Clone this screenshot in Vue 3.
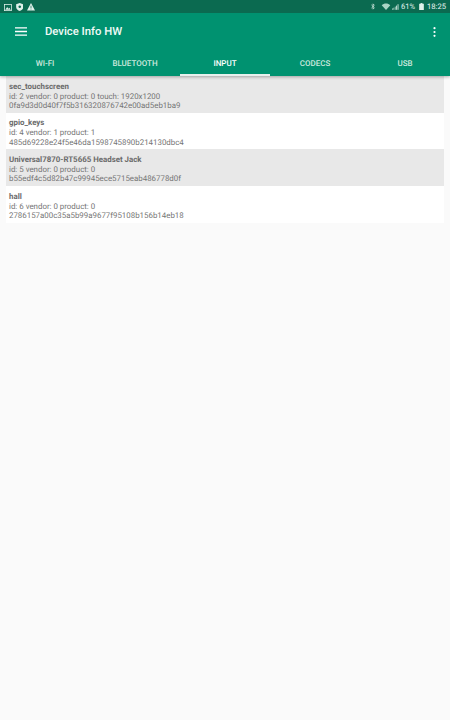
<script setup>
const tabs = [
  { label: 'WI-FI' },
  { label: 'BLUETOOTH' },
  { label: 'INPUT', active: true },
  { label: 'CODECS' },
  { label: 'USB' }
]
const devices = [
  { name: 'sec_touchscreen', info: 'id: 2 vendor: 0 product: 0 touch: 1920x1200', hash: '0fa9d3d0d40f7f5b316320876742e00ad5eb1ba9' },
  { name: 'gpio_keys', info: 'id: 4 vendor: 1 product: 1', hash: '485d69228e24f5e46da1598745890b214130dbc4' },
  { name: 'Universal7870-RT5665 Headset Jack', info: 'id: 5 vendor: 0 product: 0', hash: 'b55edf4c5d82b47c99945ece5715eab486778d0f' },
  { name: 'hall', info: 'id: 6 vendor: 0 product: 0', hash: '2786157a00c35a5b99a9677f95108b156b14eb18' }
]
</script>

<template>
  <div class="page">
    <header class="appbar">
      <div class="status">
        <div class="status-left">
          <svg width="8" height="7" viewBox="0 0 10 9"><rect x="0.5" y="0.5" width="9" height="8" fill="none" stroke="#dff1ea" stroke-width="1"/><path d="M1.5 7.5 L4 4 L5.5 6 L6.8 4.8 L8.5 7.5Z" fill="#dff1ea"/></svg>
          <svg width="7.5" height="8" viewBox="0 0 9 10"><path d="M4.5 0 L9 1.6 V5 C9 7.6 6.8 9.3 4.5 10 C2.2 9.3 0 7.6 0 5 V1.6Z" fill="#dff1ea"/><circle cx="4.5" cy="4.6" r="1.6" fill="#0b6a50"/></svg>
          <svg width="8" height="7.5" viewBox="0 0 11 10"><path d="M5.5 0 L11 10 H0Z" fill="#dff1ea"/><rect x="5" y="3.5" width="1" height="3.5" fill="#0b6a50"/><rect x="5" y="7.7" width="1" height="1" fill="#0b6a50"/></svg>
        </div>
        <div class="status-right">
          <svg class="bt" width="4" height="7" viewBox="0 0 6 10"><path d="M0.5 2.5 L5 6.8 L3 9 V1 L5 3.2 L0.5 7.5" fill="none" stroke="#dff1ea" stroke-width="1"/></svg>
          <svg class="wifi" width="10" height="7" viewBox="0 0 11 9"><path d="M0 3 C3 0 8 0 11 3 L5.5 9Z" fill="#a9d6c6"/></svg>
          <svg class="signal" width="7" height="6" viewBox="0 0 10 8"><rect x="0" y="6" width="1.2" height="2" fill="#a9d6c6"/><rect x="2" y="5" width="1.2" height="3" fill="#a9d6c6"/><rect x="4" y="3.5" width="1.2" height="4.5" fill="#a9d6c6"/><rect x="6" y="2" width="1.2" height="6" fill="#dff1ea"/><rect x="8" y="0" width="1.2" height="8" fill="#dff1ea"/></svg>
          <span class="status-text">61%</span>
          <svg class="batt" width="5" height="7" viewBox="0 0 6 9"><rect x="1.8" y="0" width="2.4" height="1.2" fill="#dff1ea"/><rect x="0" y="1" width="6" height="8" fill="#dff1ea"/></svg>
          <span class="status-text">18:25</span>
        </div>
      </div>
      <div class="toolbar">
        <svg class="menu" width="12" height="9" viewBox="0 0 12 9"><path d="M0 0.9H12M0 4.5H12M0 8.1H12" stroke="#fff" stroke-width="1.4"/></svg>
        <span class="title">Device Info HW</span>
        <svg class="more" width="3" height="10" viewBox="0 0 3 10"><circle cx="1.5" cy="1.2" r="1.1" fill="#fff"/><circle cx="1.5" cy="5" r="1.1" fill="#fff"/><circle cx="1.5" cy="8.8" r="1.1" fill="#fff"/></svg>
      </div>
      <nav class="tabs">
        <div v-for="t in tabs" :key="t.label" class="tab" :class="{ active: t.active }">{{ t.label }}</div>
      </nav>
    </header>
    <main class="list">
      <div v-for="(d, i) in devices" :key="d.name" class="row" :class="{ odd: i % 2 === 0 }">
        <div class="name">{{ d.name }}</div>
        <div class="line">{{ d.info }}</div>
        <div class="line">{{ d.hash }}</div>
      </div>
    </main>
  </div>
</template>

<style scoped>
.page {
  width: 450px;
  height: 720px;
  background: #fafafa;
  font-family: Roboto, "Liberation Sans", sans-serif;
  text-rendering: geometricPrecision;
  overflow: hidden;
}
.appbar {
  background: #009270;
  box-shadow: 0 1px 3px rgba(0, 0, 0, 0.3);
  position: relative;
}
.status {
  height: 13px;
  background: #0b6a50;
  display: flex;
  justify-content: space-between;
  align-items: center;
  padding: 0 4px;
}
.status-left, .status-right {
  display: flex;
  align-items: center;
}
.status-left { gap: 3.5px; margin-top: 1px; }
.status-right { gap: 1.5px; }
.bt { margin-right: 4px; }
.batt { margin: 0 2px; }
.status-text {
  font-size: 7.6px;
  color: #e4f3ee;
}
.toolbar {
  height: 37px;
  display: flex;
  align-items: center;
  padding: 0 14px 0 15px;
}
.title {
  margin-left: 18px;
  font-size: 11.3px;
  font-weight: 500;
  color: #f2faf7;
  flex: 1;
}
.tabs {
  height: 26px;
  display: flex;
}
.tab {
  flex: 1;
  display: flex;
  align-items: center;
  justify-content: center;
  font-size: 8px;
  font-weight: 500;
  color: #cfe9df;
  box-sizing: border-box;
}
.tab.active {
  color: #fff;
  border-bottom: 2px solid #e8f0ed;
  padding-top: 2px;
}
.list {
  padding: 0 6px 0;
}
.row {
  height: 36.7px;
  box-sizing: border-box;
  padding: 4.5px 3px 0;
  font-size: 7.9px;
  line-height: 9.5px;
  color: #757575;
  background: #fff;
}
.row.odd { background: #e8e8e8; }
.name {
  font-weight: 700;
  color: #6b6b6b;
  height: 11px;
  line-height: 11px;
}
</style>
